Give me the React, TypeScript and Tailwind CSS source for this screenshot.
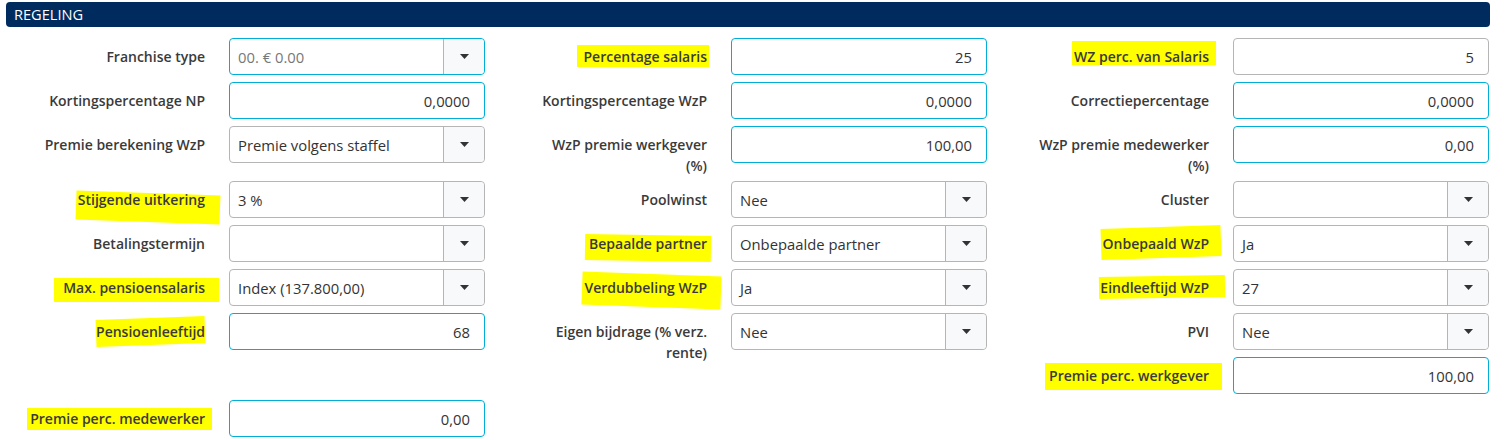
import React from "react";

type Field = {
  label: string[];
  kind: "input" | "select";
  value: string;
  border?: "cyan" | "gray";
  muted?: boolean;
  hl?: string;
};

const f = (
  label: string | string[],
  kind: "input" | "select",
  value: string,
  opts: Partial<Field> = {}
): Field => ({
  label: Array.isArray(label) ? label : [label],
  kind,
  value,
  border: kind === "input" ? "cyan" : "gray",
  ...opts,
});

const rows: { h: string; cells: (Field | null)[] }[] = [
  {
    h: "h-[44px]",
    cells: [
      f("Franchise type", "select", "00. € 0.00", { border: "cyan", muted: true }),
      f("Percentage salaris", "input", "25", { hl: "-left-[7px] -right-[2px] -top-[1px] bottom-[0px]" }),
      f("WZ perc. van Salaris", "input", "5", {
        border: "gray",
        hl: "-left-[2px] -right-[7px] -top-[5px] bottom-[2px]",
      }),
    ],
  },
  {
    h: "h-[44px]",
    cells: [
      f("Kortingspercentage NP", "input", "0,0000"),
      f("Kortingspercentage WzP", "input", "0,0000"),
      f("Correctiepercentage", "input", "0,0000"),
    ],
  },
  {
    h: "h-[55px]",
    cells: [
      f("Premie berekening WzP", "select", "Premie volgens staffel"),
      f(["WzP premie werkgever", "(%)"], "input", "100,00"),
      f(["WzP premie medewerker", "(%)"], "input", "0,00"),
    ],
  },
  {
    h: "h-[44px]",
    cells: [
      f("Stijgende uitkering", "select", "3 %", {
        hl: "-left-[2px] -right-[15px] top-[4px] -bottom-[12px] rotate-[2deg]",
      }),
      f("Poolwinst", "select", "Nee"),
      f("Cluster", "select", ""),
    ],
  },
  {
    h: "h-[44px]",
    cells: [
      f("Betalingstermijn", "select", ""),
      f("Bepaalde partner", "select", "Onbepaalde partner", {
        hl: "-left-[4px] -right-[4px] top-[2px] -bottom-[7px] rotate-[1deg]",
      }),
      f("Onbepaald WzP", "select", "Ja", { hl: "-left-[2px] -right-[12px] -top-[6px] -bottom-[4px] -rotate-[2deg]" }),
    ],
  },
  {
    h: "h-[44px]",
    cells: [
      f("Max. pensioensalaris", "select", "Index (137.800,00)", {
        hl: "-left-[9px] -right-[14px] top-[1px] -bottom-[4px]",
      }),
      f("Verdubbeling WzP", "select", "Ja", { hl: "-left-[2px] -right-[14px] -top-[3px] -bottom-[9px] rotate-[2deg]" }),
      f("Eindleeftijd WzP", "select", "27", { hl: "-left-[1px] -right-[16px] -top-[1px] bottom-[0px] -rotate-[1deg]" }),
    ],
  },
  {
    h: "h-[44px]",
    cells: [
      f("Pensioenleeftijd", "input", "68", { hl: "left-[0px] right-[0px] -top-[3px] -bottom-[3px] -rotate-[2deg]" }),
      f(["Eigen bijdrage (% verz.", "rente)"], "select", "Nee"),
      f("PVI", "select", "Nee"),
    ],
  },
  {
    h: "h-[43px]",
    cells: [
      null,
      null,
      f("Premie perc. werkgever", "input", "100,00", { hl: "-left-[4px] -right-[13px] -top-[2px] -bottom-[4px]" }),
    ],
  },
  {
    h: "h-[40px]",
    cells: [
      f("Premie perc. medewerker", "input", "0,00", { hl: "-left-[3px] -right-[7px] top-[0px] -bottom-[1px]" }),
      null,
      null,
    ],
  },
];

function Caret() {
  return (
    <svg width="9" height="5" viewBox="0 0 9 5" aria-hidden="true">
      <path d="M0 0h9L4.5 5z" fill="#333" />
    </svg>
  );
}

function Control({ field }: { field: Field }) {
  const border = field.border === "cyan" ? "border-[#00aed6]" : "border-[#b5b5b5]";
  if (field.kind === "select") {
    return (
      <div className={`flex h-[37px] w-[256px] rounded-[4px] border bg-white ${border}`}>
        <div
          className={`flex flex-1 items-center pl-[8px] pt-[2px] text-[14.8px] ${field.muted ? "text-[#777]" : "text-[#333]"}`}
        >
          {field.value}
        </div>
        <div className="flex w-[41px] items-center justify-center rounded-r-[4px] border-l border-[#b5b5b5] bg-[#f8f9fb]">
          <Caret />
        </div>
      </div>
    );
  }
  return (
    <div
      className={`flex h-[37px] w-[256px] items-center justify-end rounded-[4px] border bg-white pr-[14px] pt-[2px] text-[14.8px] text-[#333] ${border}`}
    >
      {field.value}
    </div>
  );
}

function FormField({ field }: { field: Field }) {
  return (
    <div className="flex items-start">
      <div className="w-[205px] shrink-0 pt-[8px] text-right text-[14px] leading-[21px] font-semibold text-[#3a3a3a]">
        {field.label.map((line) => (
          <div key={line} className="whitespace-nowrap">
            <span className="relative inline-block">
              {field.hl ? <span className={`absolute bg-[#ffff00] ${field.hl}`} /> : null}
              <span className="relative">{line}</span>
            </span>
          </div>
        ))}
      </div>
      <div className="ml-[24px]">
        <Control field={field} />
      </div>
    </div>
  );
}

export default function App() {
  return (
    <div className="w-[1506px] bg-white pt-[2px] text-[14px] font-['Open_Sans',_'Liberation_Sans',_sans-serif]">
      <div className="ml-[6px] flex h-[25px] w-[1484px] items-center rounded-[4px] bg-[#002b5e] pl-[8px] text-[14.6px] text-white">
        REGELING
      </div>
      <div className="mt-[11px]">
        {rows.map((row, i) => (
          <div key={i} className={`grid grid-cols-3 ${row.h}`}>
            {row.cells.map((cell, j) => (
              <div key={j}>{cell ? <FormField field={cell} /> : null}</div>
            ))}
          </div>
        ))}
      </div>
    </div>
  );
}
